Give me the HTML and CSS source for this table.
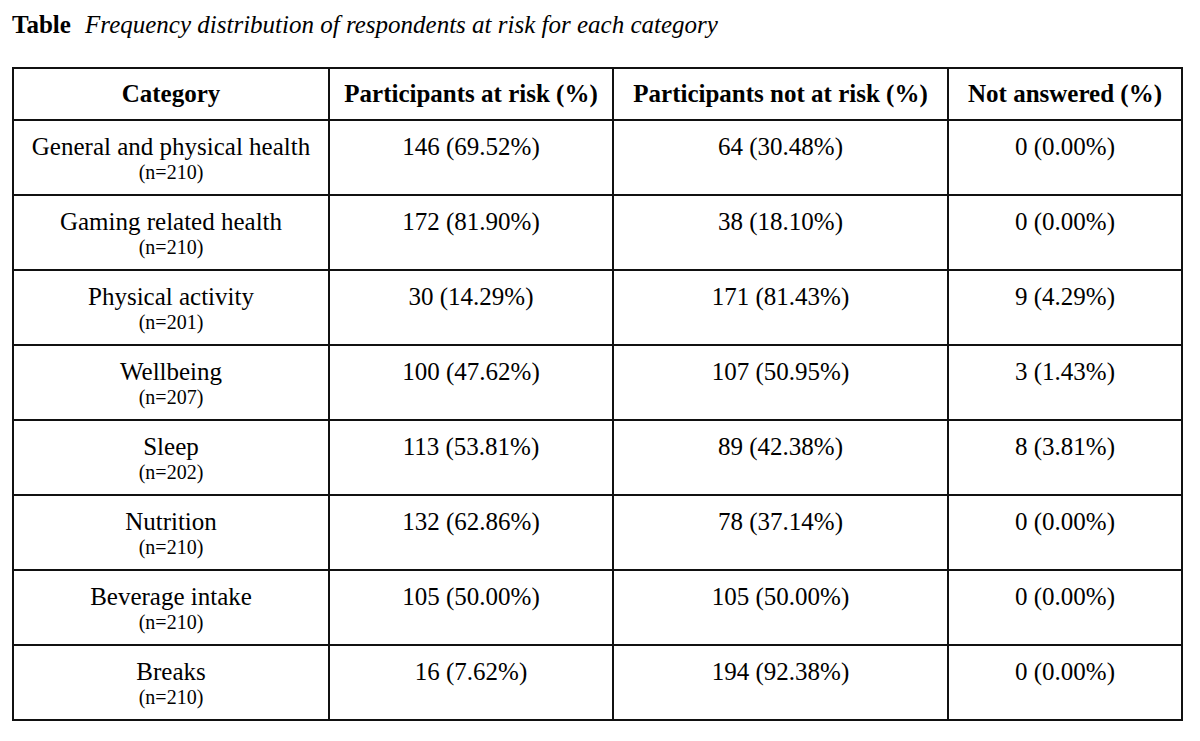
FILE: index.html
```html
<!DOCTYPE html>
<html>
<head>
<meta charset="utf-8">
<link rel="stylesheet" href="styles.css">
</head>
<body>
<div class="page">
  <p class="caption"><span class="cap-label">Table</span> <span class="cap-text">Frequency distribution of respondents at risk for each category</span></p>
  <table class="freq">
    <colgroup>
      <col class="c1"><col class="c2"><col class="c3"><col class="c4">
    </colgroup>
    <thead>
      <tr><th>Category</th><th>Participants at risk (%)</th><th>Participants not at risk (%)</th><th>Not answered (%)</th></tr>
    </thead>
    <tbody>
      <tr><td><span class="cat">General and physical health</span><span class="n">(n=210)</span></td><td class="num">146 (69.52%)</td><td class="num">64 (30.48%)</td><td class="num">0 (0.00%)</td></tr>
      <tr><td><span class="cat">Gaming related health</span><span class="n">(n=210)</span></td><td class="num">172 (81.90%)</td><td class="num">38 (18.10%)</td><td class="num">0 (0.00%)</td></tr>
      <tr><td><span class="cat">Physical activity</span><span class="n">(n=201)</span></td><td class="num">30 (14.29%)</td><td class="num">171 (81.43%)</td><td class="num">9 (4.29%)</td></tr>
      <tr><td><span class="cat">Wellbeing</span><span class="n">(n=207)</span></td><td class="num">100 (47.62%)</td><td class="num">107 (50.95%)</td><td class="num">3 (1.43%)</td></tr>
      <tr><td><span class="cat">Sleep</span><span class="n">(n=202)</span></td><td class="num">113 (53.81%)</td><td class="num">89 (42.38%)</td><td class="num">8 (3.81%)</td></tr>
      <tr><td><span class="cat">Nutrition</span><span class="n">(n=210)</span></td><td class="num">132 (62.86%)</td><td class="num">78 (37.14%)</td><td class="num">0 (0.00%)</td></tr>
      <tr><td><span class="cat">Beverage intake</span><span class="n">(n=210)</span></td><td class="num">105 (50.00%)</td><td class="num">105 (50.00%)</td><td class="num">0 (0.00%)</td></tr>
      <tr><td><span class="cat">Breaks</span><span class="n">(n=210)</span></td><td class="num">16 (7.62%)</td><td class="num">194 (92.38%)</td><td class="num">0 (0.00%)</td></tr>
    </tbody>
  </table>
</div>
</body>
</html>
```
FILE: styles.css
```css
html, body {
  margin: 0;
  padding: 0;
  background: #fff;
}
body {
  font-family: "Liberation Serif", "Times New Roman", serif;
  color: #000;
}
.page {
  padding: 0 0 0 12px;
}
.caption {
  margin: 0;
  padding-top: 11px;
  font-size: 25px;
  line-height: 28px;
  height: 55px;
  box-sizing: border-box;
}
.cap-label {
  font-weight: bold;
  margin-right: 8px;
}
.cap-text {
  font-style: italic;
}
.freq {
  border-collapse: collapse;
  table-layout: fixed;
  width: 1169px;
  margin-top: 12px;
}
.c1 { width: 316px; }
.c2 { width: 284px; }
.c3 { width: 335px; }
.c4 { width: 234px; }
.freq th, .freq td {
  border: 2px solid #111;
  text-align: center;
  padding: 0;
}
.freq th {
  height: 52px;
  font-size: 25px;
  font-weight: bold;
  vertical-align: middle;
  box-sizing: border-box;
}
.freq td {
  height: 75px;
  vertical-align: top;
  padding-top: 12px;
  box-sizing: border-box;
}
.cat {
  display: block;
  font-size: 25px;
  line-height: 28px;
}
.n {
  display: block;
  font-size: 20px;
  line-height: 22px;
}
.num {
  font-size: 25px;
  line-height: 28px;
}
```
